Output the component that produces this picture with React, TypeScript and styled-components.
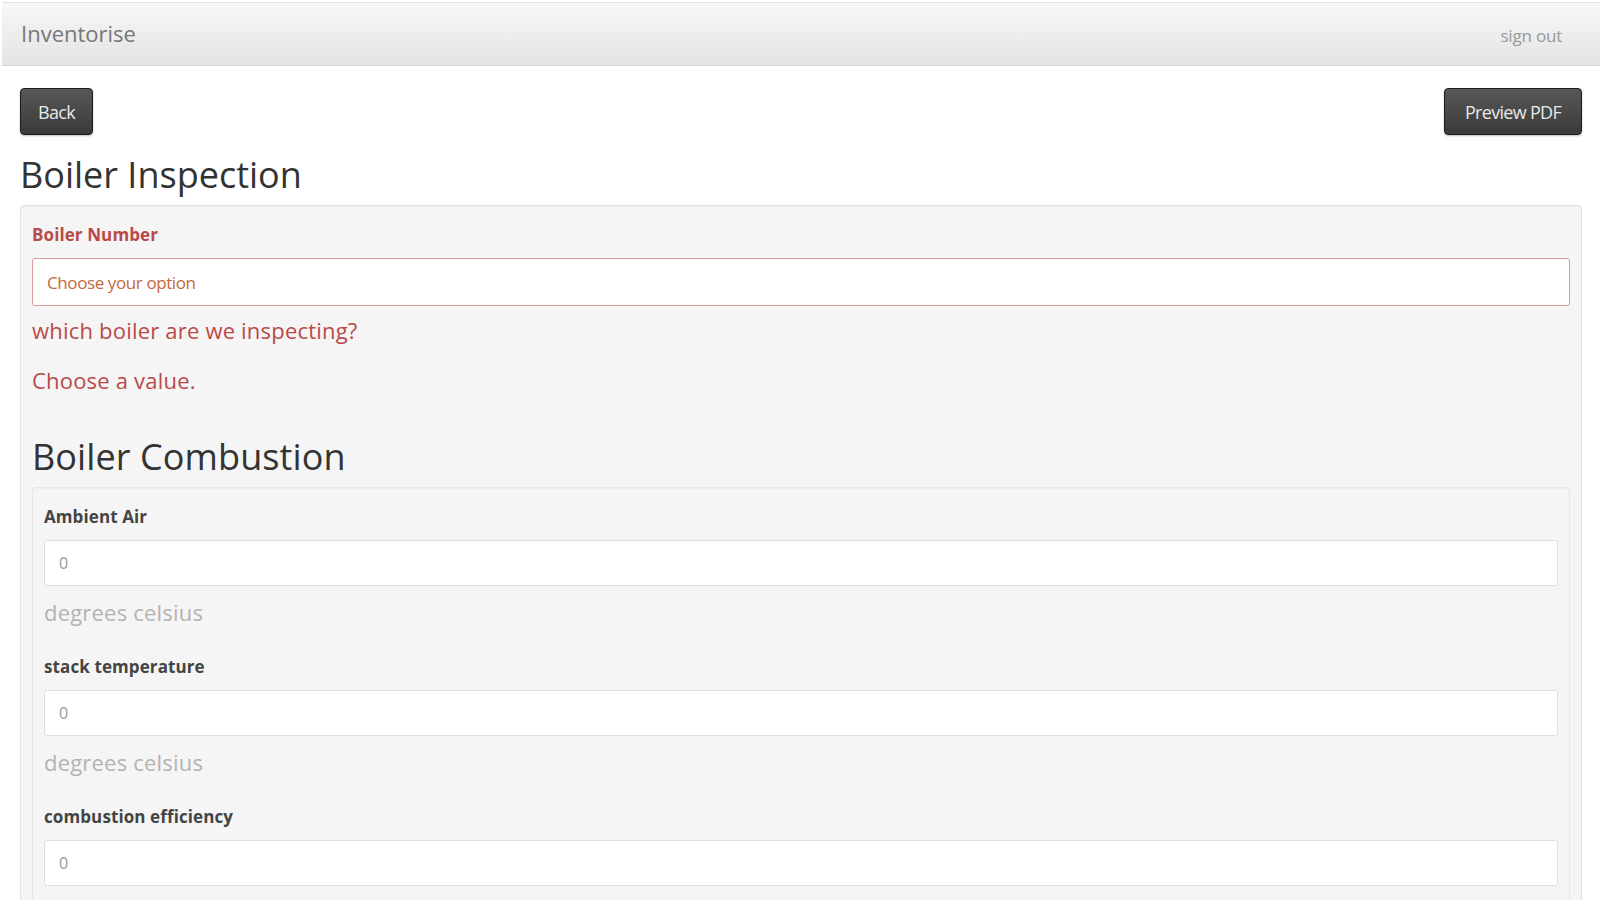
import React from 'react';
import styled, { createGlobalStyle } from 'styled-components';

const GlobalStyle = createGlobalStyle`
  html, body {
    margin: 0;
    padding: 0;
    background: #ffffff;
    font-family: 'Open Sans', 'Noto Sans', 'Liberation Sans', sans-serif;
    color: #333;
    overflow: hidden;
  }
`;

const Navbar = styled.div`
  height: 62px;
  margin: 2px 0 0 2px;
  display: flex;
  align-items: center;
  justify-content: space-between;
  padding: 0 38px 0 19px;
  background: linear-gradient(to bottom, #f7f7f7, #e4e4e4);
  border-top: 1px solid #e2e2e2;
  border-bottom: 1px solid #d6d6d6;
`;

const Brand = styled.div`
  font-size: 22px;
  color: #777;
  margin-top: -2px;
`;

const NavLink = styled.a`
  font-size: 17px;
  color: #999;
  letter-spacing: -0.2px;
  margin-top: 2px;
`;

const Page = styled.div`
  padding: 0 18px 0 20px;
`;

const Toolbar = styled.div`
  display: flex;
  justify-content: space-between;
  margin-top: 22px;
`;

const Button = styled.button<{ $pad?: number }>`
  height: 47px;
  padding: 0 ${(p) => p.$pad ?? 17}px;
  border: 1px solid #1c1c1c;
  border-radius: 4px;
  background: linear-gradient(to bottom, #575757, #3a3a3a);
  color: #e8e8e8;
  font-family: 'Open Sans', 'Noto Sans', sans-serif;
  font-size: 18px;
  letter-spacing: -0.7px;
  box-shadow: 0 1px 2px rgba(0, 0, 0, 0.25);
`;

const Title = styled.h1`
  margin: 20px 0 10px 0;
  font-size: 36px;
  line-height: 40px;
  font-weight: 400;
  color: #333;
`;

const Well = styled.div<{ $nested?: boolean }>`
  background: #f5f5f5;
  border: 1px solid ${(p) => (p.$nested ? '#e6e6e6' : '#e3e3e3')};
  border-radius: 4px;
  padding: 19px 11px 40px 11px;
  box-shadow: inset 0 1px 1px rgba(0, 0, 0, 0.03);
`;

const Label = styled.label<{ $error?: boolean }>`
  display: block;
  font-size: 17px;
  line-height: 20px;
  font-weight: 700;
  letter-spacing: 0.1px;
  color: ${(p) => (p.$error ? '#b94a48' : '#444')};
`;

const Select = styled.div`
  margin-top: 13px;
  height: 46px;
  display: flex;
  align-items: center;
  padding: 0 14px;
  background: #fff;
  border: 1px solid #d99a9c;
  border-radius: 3px;
  font-size: 17px;
  letter-spacing: -0.4px;
  color: #c6683c;
`;

const Input = styled.div`
  margin-top: 13px;
  height: 44px;
  display: flex;
  align-items: center;
  padding: 0 14px;
  background: #fff;
  border: 1px solid #dedede;
  border-radius: 3px;
  font-size: 16px;
  color: #999;
`;

const Help = styled.div<{ $error?: boolean; $gap?: number }>`
  margin-top: ${(p) => p.$gap ?? 11}px;
  font-size: 22px;
  line-height: 30px;
  letter-spacing: 0.2px;
  color: ${(p) => (p.$error ? '#b94a48' : '#b3b3b3')};
`;

const Field = styled.div`
  & + & {
    margin-top: 30px;
  }
`;

const SectionTitle = styled.h2`
  margin: 42px 0 10px 0;
  font-size: 36px;
  line-height: 40px;
  font-weight: 400;
  letter-spacing: 0.1px;
  color: #333;
`;

const fields = ['Ambient Air', 'stack temperature', 'combustion efficiency'];

export default function App() {
  return (
    <>
      <GlobalStyle />
      <Navbar>
        <Brand>Inventorise</Brand>
        <NavLink>sign out</NavLink>
      </Navbar>
      <Page>
        <Toolbar>
          <Button>Back</Button>
          <Button $pad={20}>Preview PDF</Button>
        </Toolbar>
        <Title>Boiler Inspection</Title>
        <Well>
          <Label $error>Boiler Number</Label>
          <Select>Choose your option</Select>
          <Help $error $gap={9}>which boiler are we inspecting?</Help>
          <Help $error $gap={20}>Choose a value.</Help>
          <SectionTitle>Boiler Combustion</SectionTitle>
          <Well $nested>
            {fields.map((f) => (
              <Field key={f}>
                <Label>{f}</Label>
                <Input>0</Input>
                <Help>degrees celsius</Help>
              </Field>
            ))}
          </Well>
        </Well>
      </Page>
    </>
  );
}
